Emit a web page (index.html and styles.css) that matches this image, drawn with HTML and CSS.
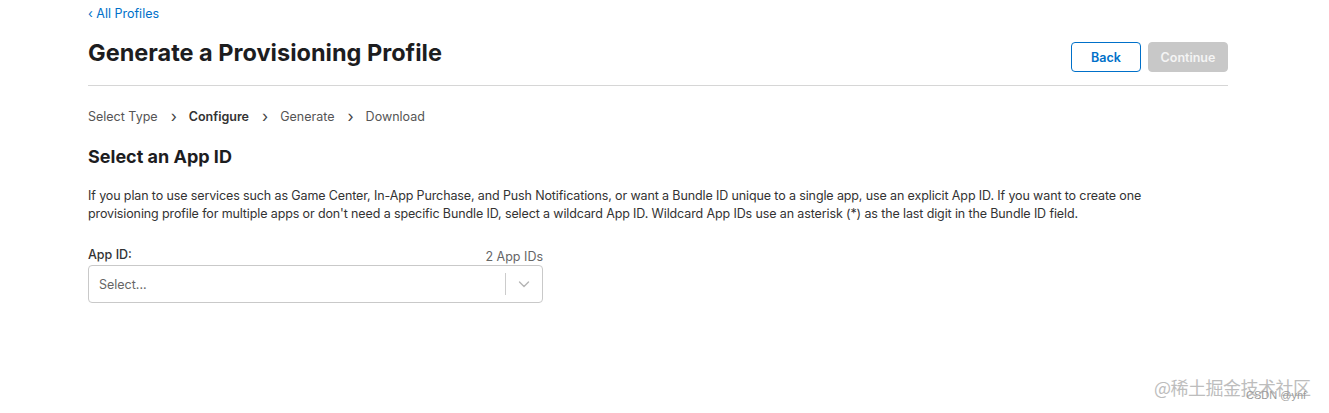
FILE: index.html
```html
<!DOCTYPE html>
<html>
<head>
<meta charset="utf-8">
<link rel="stylesheet" href="styles.css">
</head>
<body>
<div class="page">
  <a class="back-link" href="#">&lsaquo; All Profiles</a>
  <div class="header">
    <h1 class="title">Generate a Provisioning Profile</h1>
    <div class="actions">
      <button class="btn btn-back">Back</button>
      <button class="btn btn-continue">Continue</button>
    </div>
  </div>
  <div class="steps">
    <span class="step">Select Type</span>
    <span class="chev">&rsaquo;</span>
    <span class="step current">Configure</span>
    <span class="chev">&rsaquo;</span>
    <span class="step">Generate</span>
    <span class="chev">&rsaquo;</span>
    <span class="step">Download</span>
  </div>
  <h2 class="subtitle">Select an App ID</h2>
  <p class="desc">If you plan to use services such as Game Center, In-App Purchase, and Push Notifications, or want a Bundle ID unique to a single app, use an explicit App ID. If you want to create one provisioning profile for multiple apps or don't need a specific Bundle ID, select a wildcard App ID. Wildcard App IDs use an asterisk (*) as the last digit in the Bundle ID field.</p>
  <div class="field">
    <div class="field-head">
      <span class="label">App ID:</span>
      <span class="count">2 App IDs</span>
    </div>
    <div class="select">
      <span class="placeholder">Select...</span>
      <span class="sep"></span>
      <span class="arrow">
        <svg width="14" height="14" viewBox="0 0 14 14"><path d="M2.5 5 L7 9.5 L11.5 5" fill="none" stroke="#b5b5b5" stroke-width="1.4" stroke-linecap="round" stroke-linejoin="round"/></svg>
      </span>
    </div>
  </div>
</div>
<div class="watermark">
  <div class="wm-main">@稀土掘金技术社区</div>
  <div class="wm-sub">CSDN @ynf</div>
</div>
</body>
</html>
```
FILE: styles.css
```css
html, body {
  margin: 0;
  padding: 0;
  background: #fff;
}
body {
  font-family: Inter, "Noto Sans", "Noto Sans CJK SC", sans-serif;
  color: #1d1d1f;
  width: 1329px;
  height: 413px;
  position: relative;
  overflow: hidden;
}
.page {
  width: 1140px;
  margin-left: 88px;
  padding-top: 6px;
}
.back-link {
  display: block;
  font-size: 12.5px;
  line-height: 16px;
  color: #0070c9;
  text-decoration: none;
}
.header {
  display: flex;
  justify-content: space-between;
  align-items: flex-start;
  border-bottom: 1px solid #d6d6d6;
  height: 64px;
  box-sizing: border-box;
}
.title {
  margin: 19px 0 0 0;
  font-size: 23.5px;
  line-height: 24px;
  font-weight: 700;
  color: #1d1d1f;
}
.actions {
  display: flex;
  gap: 7px;
  margin-top: 20px;
}
.btn {
  font-family: Inter, sans-serif;
  font-size: 12.5px;
  font-weight: 600;
  height: 30px;
  border-radius: 4px;
  padding: 0;
  box-sizing: border-box;
}
.btn-back {
  width: 70px;
  background: #fff;
  border: 1px solid #0070c9;
  color: #0070c9;
}
.btn-continue {
  width: 80px;
  background: #c8c8c8;
  border: 1px solid #c8c8c8;
  color: #f4f4f4;
}
.steps {
  display: flex;
  align-items: center;
  margin-top: 23px;
  font-size: 12.5px;
  line-height: 16px;
  color: #555;
}
.chev {
  font-size: 16px;
  color: #444;
  margin: 0 12px 0 13px;
  line-height: 16px;
  position: relative;
  top: -1px;
}
.step.current {
  font-weight: 600;
  color: #333;
}
.subtitle {
  margin: 20px 0 0 0;
  font-size: 18px;
  line-height: 24px;
  font-weight: 700;
  color: #1d1d1f;
}
.desc {
  margin: 18px 0 0 0;
  max-width: 1100px;
  font-size: 12.5px;
  line-height: 18px;
  color: #333;
  letter-spacing: -0.12px;
}
.field {
  width: 455px;
  margin-top: 24px;
}
.field-head {
  display: flex;
  justify-content: space-between;
  align-items: flex-end;
  font-size: 12.5px;
  line-height: 16px;
  height: 17px;
}
.label {
  color: #333;
  font-weight: 500;
  align-self: flex-start;
}
.count {
  color: #666;
  position: relative;
  top: 1px;
}
.select {
  display: flex;
  align-items: center;
  height: 38px;
  border: 1px solid #c9c9c9;
  border-radius: 4px;
  box-sizing: border-box;
  margin-top: 1px;
}
.placeholder {
  flex: 1;
  padding-left: 10px;
  font-size: 12.5px;
  color: #666;
}
.sep {
  width: 1px;
  height: 22px;
  background: #ccc;
}
.arrow {
  width: 36px;
  display: flex;
  justify-content: center;
  align-items: center;
}
.watermark {
  position: absolute;
  left: 1154px;
  top: 376px;
  color: #bdbdbd;
}
.wm-main {
  font-family: "Noto Sans CJK SC", sans-serif;
  font-size: 18px;
  line-height: 22px;
  letter-spacing: -0.5px;
}
.wm-sub {
  position: absolute;
  left: 92px;
  top: 13px;
  font-family: "Liberation Sans", sans-serif;
  font-size: 11px;
  color: #9a9a9a;
}
```
